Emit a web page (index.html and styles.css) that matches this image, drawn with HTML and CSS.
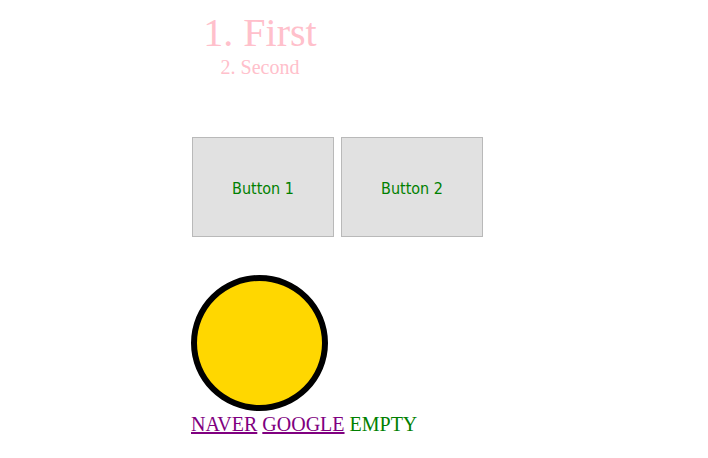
FILE: index.html
```html
<!DOCTYPE html>
<html>
<head>
<meta charset="utf-8">
<link rel="stylesheet" href="styles.css">
</head>
<body>
<div class="page">
  <ol class="list">
    <li class="item item-first">First</li>
    <li class="item item-second">Second</li>
  </ol>
  <div class="buttons">
    <button class="btn">Button 1</button>
    <button class="btn">Button 2</button>
  </div>
  <div class="circle"></div>
  <div class="links">
    <a class="link" href="#naver">NAVER</a>
    <a class="link" href="#google">GOOGLE</a>
    <span class="empty">EMPTY</span>
  </div>
</div>
</body>
</html>
```
FILE: styles.css
```css
html, body {
  margin: 0;
  padding: 0;
  background: #fff;
}
body {
  font-family: "Liberation Serif", "Times New Roman", serif;
  padding: 10px 0 0 0;
}
.page {
  padding-left: 192px;
}
.list {
  margin: 0;
  padding: 0;
  width: 136px;
  list-style-position: inside;
  text-align: center;
  color: #ffc0cb;
}
.item-first {
  font-size: 40px;
  line-height: 46px;
}
.item-second {
  font-size: 20px;
  line-height: 23px;
}
.buttons {
  display: flex;
  gap: 7px;
  margin-top: 58px;
}
.btn {
  width: 142px;
  height: 100px;
  margin: 0;
  padding: 2px 0 0 0;
  background: #e1e1e1;
  border: 1px solid #b9b9b9;
  color: #008000;
  font-family: "DejaVu Sans Condensed", "DejaVu Sans", Verdana, sans-serif;
  font-size: 16px;
}
.circle {
  margin-top: 38px;
  margin-left: -1px;
  width: 125px;
  height: 124px;
  border: 6px solid #000;
  border-radius: 50%;
  background: #ffd700;
}
.links {
  margin-top: 2px;
  font-size: 20px;
  line-height: 23px;
  margin-left: -1px;
}
.link {
  color: #800080;
}
.empty {
  color: #008000;
}
```
